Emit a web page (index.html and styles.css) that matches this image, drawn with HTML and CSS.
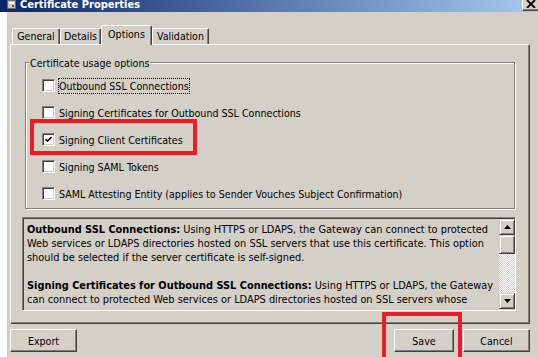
FILE: index.html
```html
<!DOCTYPE html>
<html>
<head>
<meta charset="utf-8">
<title>Certificate Properties</title>
<link rel="stylesheet" href="styles.css">
</head>
<body>
<div class="window">
  <div class="titlebar">
    <svg class="appicon" viewBox="0 0 9 9" width="9" height="9">
      <rect x="0.5" y="0.5" width="8" height="8" fill="#c8c4bc" stroke="#6a6a6a"/>
      <rect x="2" y="2" width="5" height="2" fill="#ffffff"/>
      <rect x="5" y="5" width="2" height="2" fill="#c0282c"/>
    </svg>
    <span class="title">Certificate Properties</span>
    <span class="close">
      <svg viewBox="0 0 10 8" width="10" height="8">
        <path d="M1 0 L9 8 M9 0 L1 8" stroke="#000" stroke-width="1.8"/>
      </svg>
    </span>
  </div>
  <div class="main">
    <div class="edge"></div>
    <div class="dialog">
      <div class="tabs">
        <div class="tab t-general">General</div>
        <div class="tab t-details">Details</div>
        <div class="tab active t-options">Options</div>
        <div class="tab t-validation">Validation</div>
      </div>
      <div class="panel">
        <div class="group">
          <span class="legend">Certificate usage options</span>
          <div class="opt"><span class="cb"></span><span class="lbl focus">Outbound SSL Connections</span></div>
          <div class="opt"><span class="cb"></span><span class="lbl">Signing Certificates for Outbound SSL Connections</span></div>
          <div class="opt"><span class="cb"><svg viewBox="0 0 7 7" width="7" height="7"><path d="M0.5 3 L2.5 5 L6.5 1" fill="none" stroke="#000" stroke-width="1.6"/></svg></span><span class="lbl">Signing Client Certificates</span></div>
          <div class="opt"><span class="cb"></span><span class="lbl">Signing SAML Tokens</span></div>
          <div class="opt"><span class="cb"></span><span class="lbl">SAML Attesting Entity (applies to Sender Vouches Subject Confirmation)</span></div>
        </div>
        <div class="desc">
          <div class="desc-text">
            <p><b>Outbound SSL Connections:</b> Using HTTPS or LDAPS, the Gateway can connect to protected<br>Web services or LDAPS directories hosted on SSL servers that use this certificate. This option<br>should be selected if the server certificate is self-signed.</p>
            <p><b>Signing Certificates for Outbound SSL Connections:</b> Using HTTPS or LDAPS, the Gateway<br>can connect to protected Web services or LDAPS directories hosted on SSL servers whose</p>
          </div>
          <div class="scrollbar">
            <div class="sb-btn"><svg viewBox="0 0 7 4" width="7" height="4"><path d="M3.5 0 L7 4 L0 4 Z" fill="#000"/></svg></div>
            <div class="sb-thumb"></div>
            <div class="sb-track"></div>
            <div class="sb-btn"><svg viewBox="0 0 7 4" width="7" height="4"><path d="M0 0 L7 0 L3.5 4 Z" fill="#000"/></svg></div>
          </div>
        </div>
      </div>
      <div class="buttons">
        <button class="btn btn-export">Export</button>
        <div class="btn-group">
          <button class="btn btn-save">Save</button>
          <button class="btn btn-cancel">Cancel</button>
        </div>
      </div>
    </div>
  </div>
  <div class="mark mark-client"></div>
  <div class="mark mark-save"></div>
</div>
</body>
</html>
```
FILE: styles.css
```css
html, body {
  margin: 0;
  padding: 0;
}
body {
  background: #d4d0c8;
  font-family: "DejaVu Sans Condensed", "DejaVu Sans", sans-serif;
  font-stretch: condensed;
  font-size: 10.6px;
  color: #000;
  overflow: hidden;
}
.window {
  position: relative;
  width: 538px;
  height: 357px;
  display: flex;
  flex-direction: column;
  overflow: hidden;
}
.titlebar {
  height: 12px;
  flex: none;
  display: flex;
  align-items: flex-start;
  padding-left: 7px;
  background: linear-gradient(to right, #0a246a, #a6caf0);
  color: #fff;
  overflow: hidden;
}
.appicon {
  flex: none;
  margin-right: 4px;
}
.title {
  font-weight: bold;
  font-size: 11px;
  line-height: 10px;
  white-space: nowrap;
}
.close {
  margin-left: auto;
  width: 16px;
  height: 11px;
  box-sizing: border-box;
  background: #d4d0c8;
  border-left: 1px solid #fff;
  border-bottom: 1px solid #404040;
  box-shadow: inset 0 -1px #808080;
  display: flex;
  justify-content: center;
  align-items: flex-start;
}
.main {
  flex: 1;
  display: flex;
}
.edge {
  width: 7px;
  background: #fcfcfc;
}
.dialog {
  flex: 1;
  padding: 13px 8px 0 3px;
  display: flex;
  flex-direction: column;
}
.tabs {
  display: flex;
  align-items: flex-end;
  height: 19px;
  padding-left: 2px;
  position: relative;
  z-index: 1;
}
.tab {
  box-sizing: border-box;
  height: 16px;
  border-top: 1px solid #fff;
  border-left: 1px solid #fff;
  border-right: 1px solid #404040;
  box-shadow: inset -1px 0 #808080;
  border-radius: 2px 2px 0 0;
  background: #d4d0c8;
  text-align: center;
  line-height: 14px;
  white-space: nowrap;
}
.tab.active {
  height: 20px;
  margin-bottom: -1px;
  padding-top: 1px;
}
.t-general { width: 48px; }
.t-details { width: 41px; }
.t-options { width: 51px; }
.t-validation { width: 57px; }
.panel {
  box-sizing: border-box;
  height: 280px;
  border-top: 1px solid #fff;
  border-left: 1px solid #fff;
  border-right: 1px solid #404040;
  border-bottom: 1px solid #404040;
  box-shadow: inset -1px -1px #808080;
  padding: 17px 13px 0 11px;
}
.group {
  position: relative;
  box-sizing: border-box;
  height: 147px;
  margin: 0 1px 0 3px;
  border: 1px solid #808080;
  box-shadow: inset 1px 1px #fff, 1px 1px #fff;
  padding: 9px 0 0 16px;
}
.legend {
  position: absolute;
  top: -7px;
  left: 3px;
  padding: 0 1px;
  background: #d4d0c8;
  line-height: 14px;
  white-space: nowrap;
}
.opt {
  height: 27px;
  display: flex;
  align-items: center;
  gap: 3px;
}
.cb {
  flex: none;
  width: 13px;
  height: 13px;
  box-sizing: border-box;
  background: #fff;
  border: 1px solid;
  border-color: #808080 #fff #fff #808080;
  box-shadow: inset 1px 1px #404040, inset -1px -1px #d4d0c8;
  display: flex;
  align-items: center;
  justify-content: center;
}
.lbl {
  padding: 1px;
  line-height: 14px;
  white-space: nowrap;
}
.lbl.focus {
  padding: 0;
  border: 1px dotted #000;
}
.desc {
  margin-top: 8px;
  height: 94px;
  box-sizing: border-box;
  display: flex;
  border: 1px solid;
  border-color: #808080 #fff #fff #808080;
  box-shadow: inset 1px 1px #404040, inset -1px -1px #d4d0c8;
}
.desc-text {
  flex: 1;
  overflow: hidden;
  padding: 5px 0 0 4px;
  font-size: 10.9px;
  line-height: 14px;
  white-space: nowrap;
}
.desc-text p {
  margin: 0 0 14px 0;
}
.scrollbar {
  flex: none;
  width: 16px;
  margin: 1px 0 1px 0;
  display: flex;
  flex-direction: column;
}
.sb-btn, .sb-thumb {
  box-sizing: border-box;
  background: #d4d0c8;
  border: 1px solid;
  border-color: #d4d0c8 #404040 #404040 #d4d0c8;
  box-shadow: inset 1px 1px #fff, inset -1px -1px #808080;
}
.sb-btn {
  height: 16px;
  display: flex;
  align-items: center;
  justify-content: center;
}
.sb-thumb {
  height: 19px;
}
.sb-track {
  flex: 1;
  background-image: conic-gradient(#ffffff 25%, #d4d0c8 0 50%, #ffffff 0 75%, #d4d0c8 0);
  background-size: 2px 2px;
}
.buttons {
  margin-top: 5px;
  display: flex;
  justify-content: space-between;
}
.btn-group {
  display: flex;
  gap: 9px;
}
.btn {
  font: inherit;
  color: #000;
  height: 23px;
  box-sizing: border-box;
  padding: 0;
  background: #d4d0c8;
  border: 1px solid;
  border-color: #fff #404040 #404040 #fff;
  box-shadow: inset -1px -1px #808080;
  line-height: 14px;
}
.btn-export { width: 67px; }
.btn-save { width: 60px; }
.btn-cancel { width: 67px; }
.mark {
  position: absolute;
  box-sizing: border-box;
  border: 4px solid #ed1c24;
  pointer-events: none;
}
.mark-client {
  left: 30px;
  top: 119px;
  width: 167px;
  height: 36px;
}
.mark-save {
  left: 382px;
  top: 312px;
  width: 80px;
  height: 50px;
}
```
